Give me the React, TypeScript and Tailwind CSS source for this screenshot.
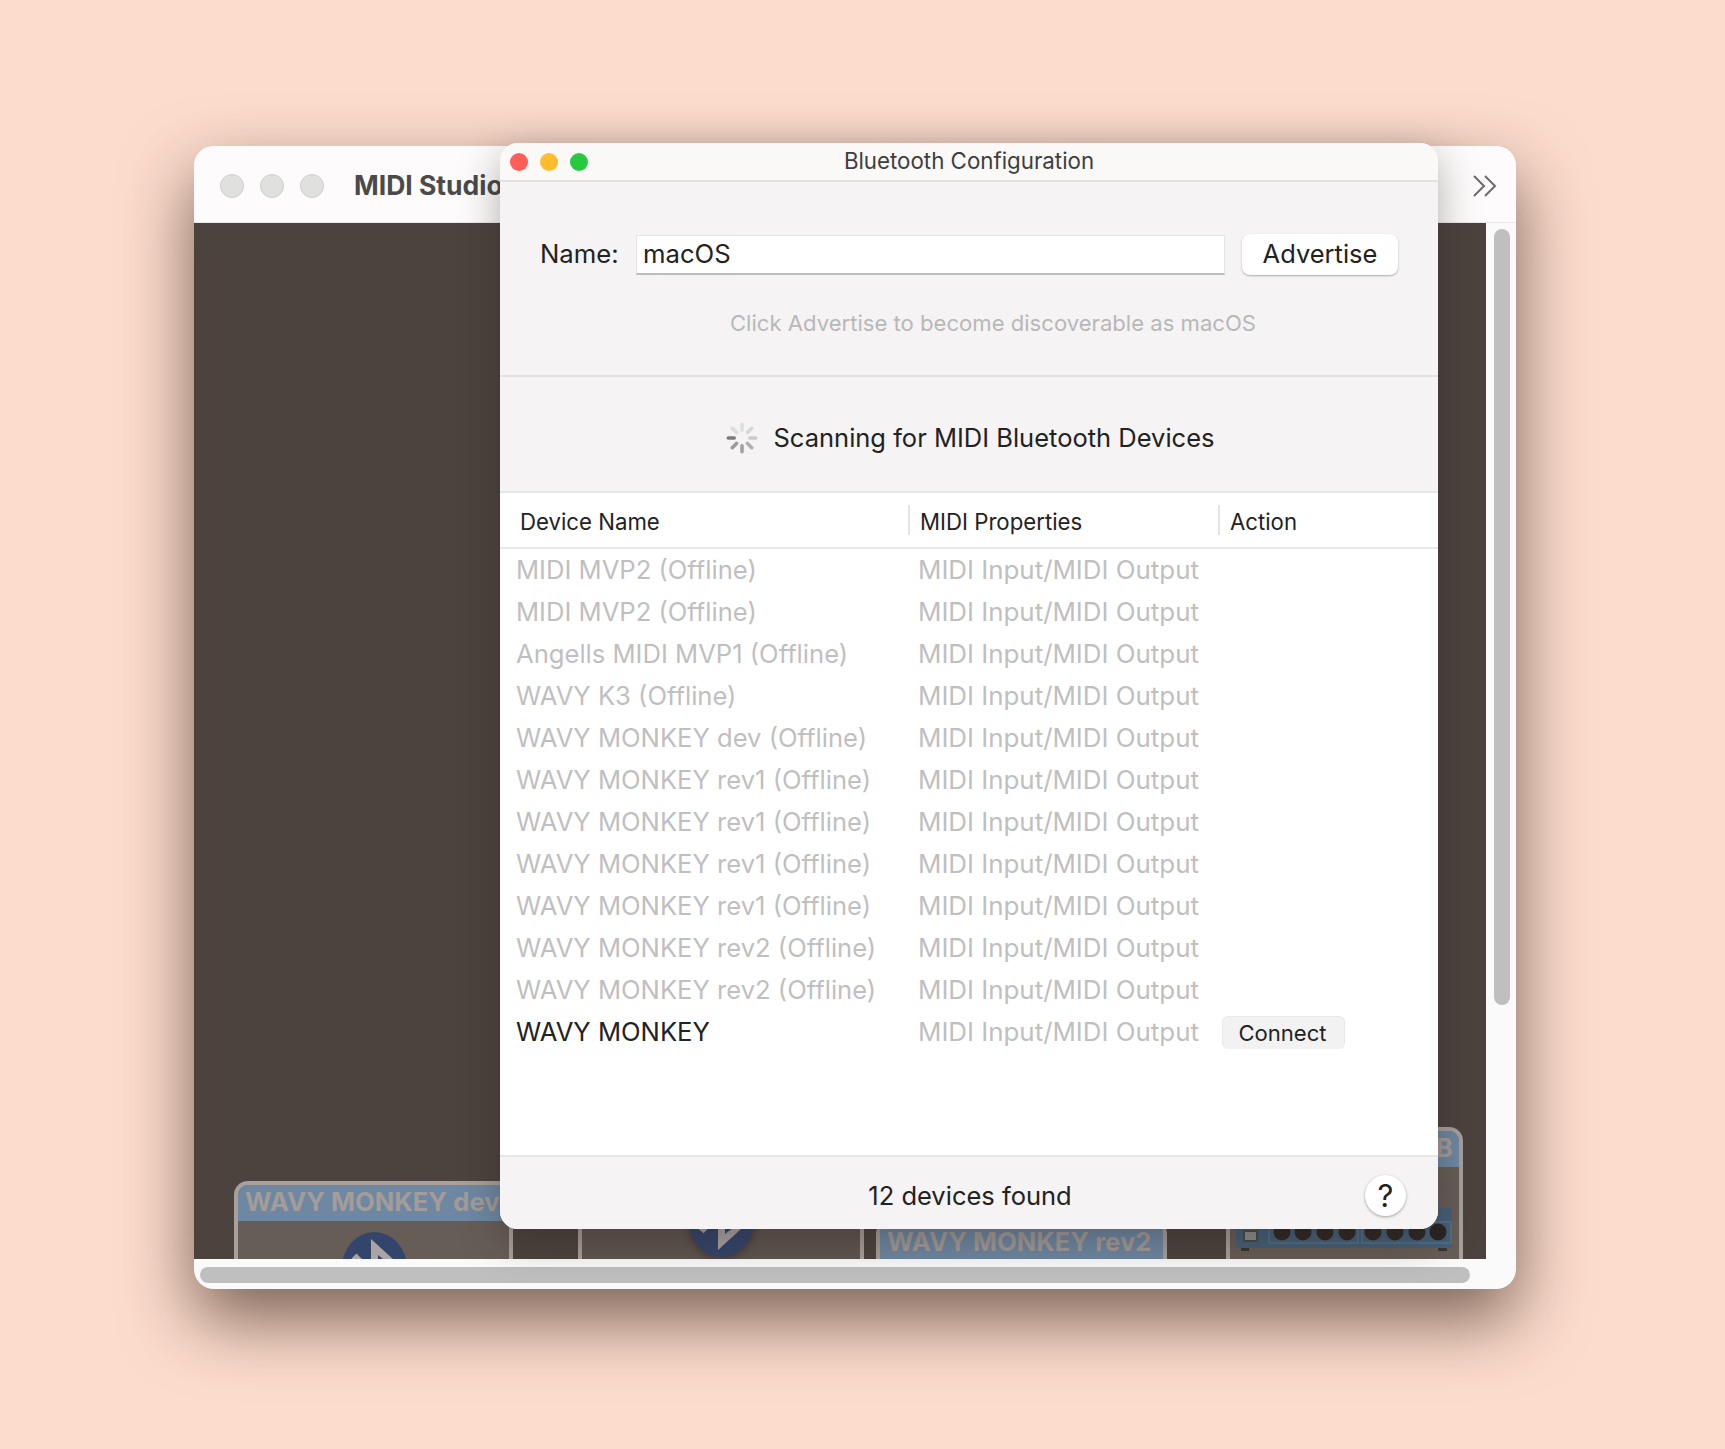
const rows = [
  "MIDI MVP2 (Offline)",
  "MIDI MVP2 (Offline)",
  "Angells MIDI MVP1 (Offline)",
  "WAVY K3 (Offline)",
  "WAVY MONKEY dev (Offline)",
  "WAVY MONKEY rev1 (Offline)",
  "WAVY MONKEY rev1 (Offline)",
  "WAVY MONKEY rev1 (Offline)",
  "WAVY MONKEY rev1 (Offline)",
  "WAVY MONKEY rev2 (Offline)",
  "WAVY MONKEY rev2 (Offline)",
];

function BluetoothDot({ className }: { className: string }) {
  return (
    <svg viewBox="0 0 65 90" className={className}>
      <rect x="0" y="0" width="65" height="90" rx="32.5" ry="36" fill="#33456b" />
      <path d="M12 24 L31 43 L12 64" fill="none" stroke="#aaa5a3" strokeWidth="7" />
      <path
        fillRule="evenodd"
        fill="#aaa5a3"
        d="M29 7 L52 28 L36 45 L52 62 L29 83 Z M36 23 L45 30 L36 37 Z M36 53 L45 60 L36 67 Z"
      />
    </svg>
  );
}

function Spinner() {
  const shades = ["#dedede", "#d6d6d6", "#cccccc", "#b0b0b0", "#a0a0a0", "#9a9a9a", "#7c7c7c", "#dcdcdc"];
  return (
    <svg viewBox="0 0 32 32" className="w-8 h-8 shrink-0">
      {shades.map((c, i) => (
        <rect key={i} x="14.25" y="0.5" width="3.5" height="9.5" rx="1.75" fill={c} transform={`rotate(${i * 45} 16 16)`} />
      ))}
    </svg>
  );
}

function CanvasNodes() {
  return (
    <>
      <div className="absolute left-[40px] top-[958px] w-[279px] h-[120px] border-[4px] border-b-0 border-[#a8a09c] rounded-t-[14px] bg-[#675d57] overflow-hidden">
        <div className="h-[36px] bg-[#6e88a3] pl-[7px] font-bold text-[25.7px] leading-[34px] text-[#a39c99] whitespace-nowrap">
          WAVY MONKEY dev
        </div>
      </div>
      <BluetoothDot className="absolute left-[148px] top-[1009px] w-[65px] h-[90px]" />
      <div className="absolute left-[384px] top-[958px] w-[286px] h-[120px] border-x-[4px] border-[#a8a09c] bg-[#5f5550]" />
      <BluetoothDot className="absolute left-[495px] top-[944px] w-[65px] h-[90px] drop-shadow-[0_3px_4px_rgba(0,0,0,0.3)]" />
      <div className="absolute left-[682px] top-[1002px] w-[291px] h-[40px] border-x-[4px] border-[#a8a09c] rounded-t-[8px] bg-[#6e88a3] pl-[7px] font-bold text-[25.7px] leading-[34px] text-[#a39c99] whitespace-nowrap overflow-hidden">
        WAVY MONKEY rev2
      </div>
      <div className="absolute left-[1032px] top-[904px] w-[237px] h-[140px] border-[4px] border-b-0 border-[#a8a09c] rounded-t-[14px] bg-[#675d57] overflow-hidden">
        <div className="h-[36px] bg-[#6e88a3] flex justify-end pr-[6px] font-bold text-[26px] leading-[34px] text-[#a39c99]">B</div>
      </div>
      <svg viewBox="0 0 216 44" className="absolute left-[1042px] top-[985px] w-[216px] h-[44px]">
        <rect x="0" y="0" width="216" height="40" rx="2" fill="#446079" />
        <rect x="33" y="14" width="89" height="21" fill="none" stroke="#5f7a90" />
        <rect x="126" y="14" width="89" height="21" fill="none" stroke="#5f7a90" />
        <rect x="8" y="23" width="13" height="10" fill="#8f8f8f" stroke="#4a4a4a" strokeWidth="2" />
        {[46, 67, 89, 111, 137, 159, 181].map((x) => (
          <circle key={x} cx={x} cy="24" r="8.5" fill="#2f2724" />
        ))}
        <circle cx="202" cy="24" r="8.5" fill="#2a2320" />
        <rect x="5" y="40" width="8" height="3" fill="#3a3531" />
        <rect x="202" y="40" width="9" height="3" fill="#3a3531" />
      </svg>
    </>
  );
}

export default function App() {
  return (
    <div className="relative w-[1725px] h-[1449px] bg-[#fcdccd] overflow-hidden font-['Inter','Liberation_Sans',sans-serif]">
      {/* MIDI Studio, behind */}
      <div className="absolute left-[194px] top-[146px] w-[1322px] h-[1143px] rounded-[20px] bg-[#fafafa] overflow-hidden flex flex-col shadow-[0_30px_70px_rgba(50,30,20,0.65)]">
        <div className="h-[77px] shrink-0 flex items-center pl-[26px] pt-[3px] bg-[#fdfbfb] border-b border-[#e8e8e8]">
          <div className="flex gap-[16px]">
            <span className="w-[24px] h-[24px] rounded-full bg-[#e0e0de] border border-[#cfcfcd]" />
            <span className="w-[24px] h-[24px] rounded-full bg-[#e0e0de] border border-[#cfcfcd]" />
            <span className="w-[24px] h-[24px] rounded-full bg-[#e0e0de] border border-[#cfcfcd]" />
          </div>
          <span className="ml-[30px] text-[26.5px] font-bold text-[#4a4a4a]">MIDI Studio</span>
          <svg viewBox="0 0 26 24" className="ml-auto mr-[18px] w-[26px] h-[24px] text-[#6b6b6b]" fill="none" stroke="currentColor" strokeWidth="2">
            <path d="M2 2 L12 12 L2 22 M13 2 L23 12 L13 22" />
          </svg>
        </div>
        <div className="flex-1 flex min-h-0">
          <div className="relative flex-1 bg-[#4c433e] overflow-hidden">
            <CanvasNodes />
          </div>
          <div className="w-[30px] shrink-0 pl-[8px] pt-[6px]">
            <div className="w-[16px] h-[776px] rounded-full bg-[#bfbfbf]" />
          </div>
        </div>
        <div className="h-[30px] shrink-0 pl-[6px] pt-[8px]">
          <div className="w-[1270px] h-[16px] rounded-full bg-[#bfbfbf]" />
        </div>
      </div>

      {/* Bluetooth Configuration dialog */}
      <div className="absolute left-[500px] top-[143px] w-[938px] h-[1086px] rounded-[18px] bg-[#f5f3f4] overflow-hidden flex flex-col shadow-[0_12px_40px_rgba(40,30,25,0.35)]">
        <div className="relative h-[39px] shrink-0 flex items-center justify-center pb-[1px] bg-[#faf9f8] border-b-2 border-[#e2e2e2]">
          <div className="absolute left-[10px] top-[10px] flex gap-[12px]">
            <span className="w-[18px] h-[18px] rounded-full bg-[#ff5f57]" />
            <span className="w-[18px] h-[18px] rounded-full bg-[#febc2e]" />
            <span className="w-[18px] h-[18px] rounded-full bg-[#28c840]" />
          </div>
          <span className="text-[22.3px] text-[#3e3e3e]">Bluetooth Configuration</span>
        </div>

        <div className="h-[195px] shrink-0 border-b-2 border-[#e2e2e2] flex flex-col">
          <div className="flex items-center pt-[52px]">
            <span className="ml-[40px] w-[96px] text-[25.7px] text-[#222]">Name:</span>
            <div className="w-[589px] h-[40px] bg-white border border-[#e4e4e4] border-b-2 border-b-[#bdbdbd] flex items-center pl-[6px] text-[25.7px] text-[#222]">
              macOS
            </div>
            <button
              type="button"
              className="ml-[17px] w-[156px] h-[41px] rounded-[8px] bg-white shadow-[0_1px_2px_rgba(0,0,0,0.3)] text-[25.5px] text-[#222]"
            >
              Advertise
            </button>
          </div>
          <p className="mt-[31px] pl-[48px] text-center text-[22.1px] leading-[34px] text-[#b8b8b8]">
            Click Advertise to become discoverable as macOS
          </p>
        </div>

        <div className="h-[114px] shrink-0 flex items-center justify-center gap-[16px] pl-[2px] pt-[8px]">
          <Spinner />
          <span className="text-[25.5px] text-[#222]">Scanning for MIDI Bluetooth Devices</span>
        </div>

        <div className="flex-1 min-h-0 bg-white border-t-2 border-[#e6e6e6] flex flex-col">
          <div className="h-[56px] shrink-0 flex items-center border-b-2 border-[#e8e8e8] text-[22.2px] text-[#222]">
            <span className="w-[408px] pl-[20px] pt-[3px]">Device Name</span>
            <span className="w-[310px] h-[30px] leading-[34px] pl-[10px] border-l-2 border-[#e4e4e4]">MIDI Properties</span>
            <span className="h-[30px] leading-[34px] pl-[10px] border-l-2 border-[#e4e4e4]">Action</span>
          </div>
          <div className="flex-1">
            {rows.map((name, i) => (
              <div key={i} className="h-[42px] flex items-center text-[#bfbfbf]">
                <span className="w-[418px] pl-[16px] text-[25.6px]">{name}</span>
                <span className="text-[25.9px]">MIDI Input/MIDI Output</span>
              </div>
            ))}
            <div className="h-[42px] flex items-center">
              <span className="w-[418px] pl-[16px] text-[25.6px] text-[#222]">WAVY MONKEY</span>
              <span className="w-[304px] text-[25.9px] text-[#bfbfbf]">MIDI Input/MIDI Output</span>
              <button
                type="button"
                className="w-[123px] h-[33px] rounded-[6px] pr-[2px] bg-[#f2f2f2] border-x border-t border-[#e8e8e8] text-[22.1px] text-[#222]"
              >
                Connect
              </button>
            </div>
          </div>
        </div>

        <div className="relative h-[74px] shrink-0 bg-[#f5f3f4] border-t-2 border-[#e6e6e6] flex items-center justify-center pt-[6px] pl-[2px]">
          <span className="text-[25.5px] text-[#222]">12 devices found</span>
          <button
            type="button"
            className="absolute right-[32px] top-[18px] w-[41px] h-[41px] rounded-full bg-white shadow-[0_1px_3px_rgba(0,0,0,0.35)] text-[31px] leading-[41px] text-[#222]"
          >
            ?
          </button>
        </div>
      </div>
    </div>
  );
}
